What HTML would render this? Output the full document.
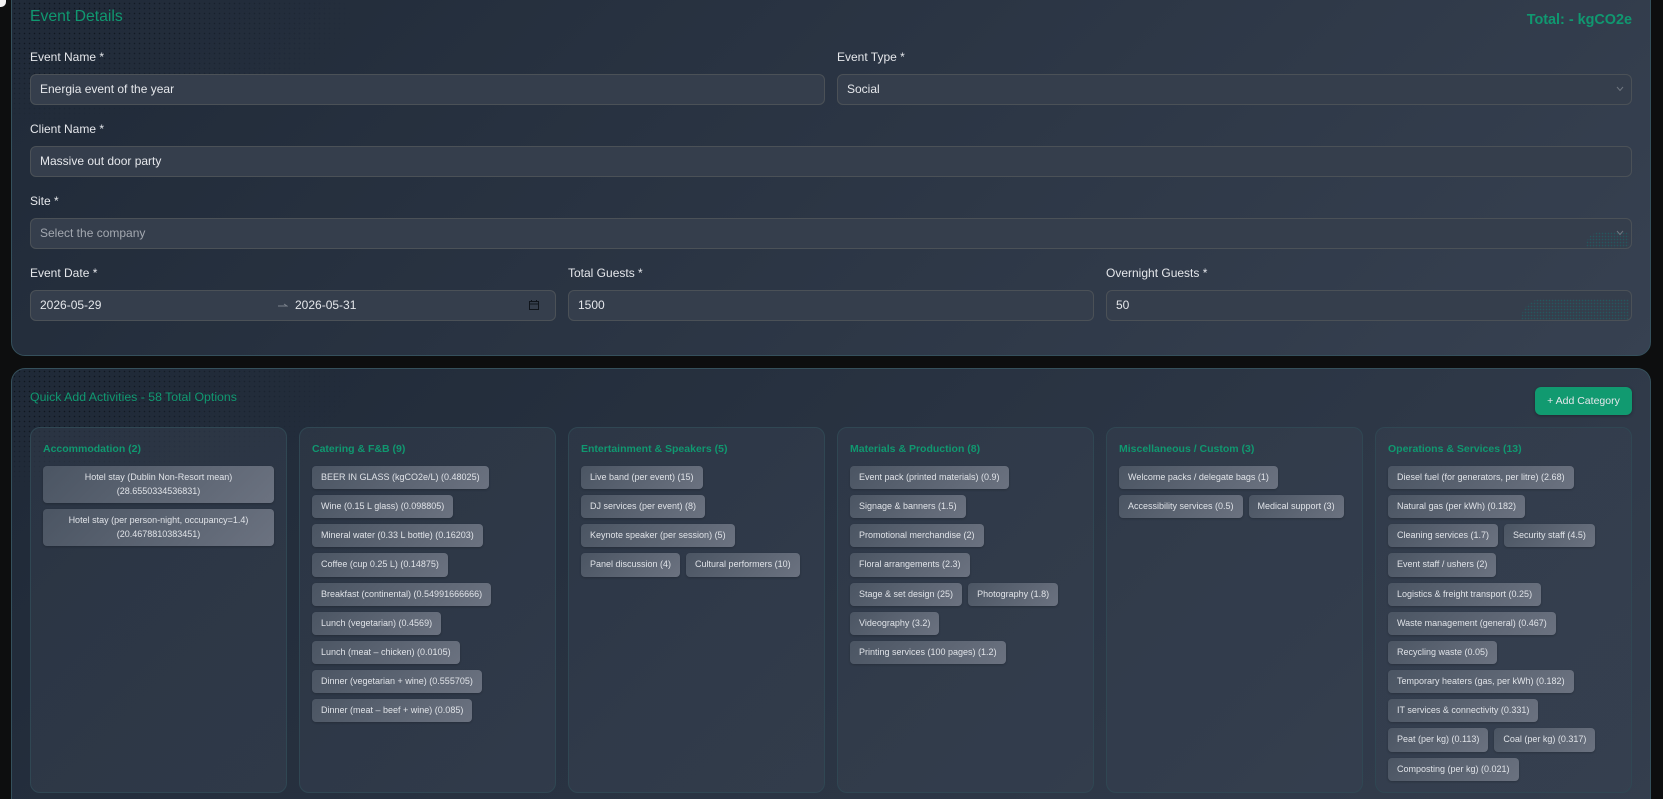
<!DOCTYPE html>
<html><head><meta charset="utf-8"><style>
*{box-sizing:border-box}
html,body{margin:0;padding:0;width:1663px;height:799px;overflow:hidden;background:#0d0e0f;font-family:"Liberation Sans",sans-serif}
#root{position:relative;width:1663px;height:799px;overflow:hidden}
.panel{position:absolute;left:11px;width:1640px;border:1px solid #35505c;border-radius:14px;background:linear-gradient(135deg,#1f2937 0%,#374151 100%);overflow:hidden}
#p1{top:-60px;height:416px}
#p2{top:368px;height:431px;border-bottom:0;border-radius:14px 14px 0 0;background:linear-gradient(135deg,#1f2937 0%,#374151 116%)}
.dots{position:absolute;left:0;top:0;width:370px;height:150px;background-image:radial-gradient(circle,rgba(5,10,15,.6) .6px,transparent .9px);background-size:5px 5px;-webkit-mask-image:radial-gradient(ellipse 340px 100px at 0 20px,#000 30%,transparent 100%);mask-image:radial-gradient(ellipse 340px 100px at 0 20px,#000 30%,transparent 100%)}
.abs{position:absolute;white-space:nowrap}
.lab{position:absolute;white-space:nowrap;font-size:12px;line-height:16px;color:#e5e7eb}
.inp{position:absolute;height:31px;border:1px solid #4b5157;border-radius:6px;background:#353e4c;color:#e5e7eb;font-size:12px;line-height:29px;padding-left:9px;white-space:nowrap}
.g{color:#109870}
.col{position:absolute;top:427px;width:257px;height:366px;border:1px solid #304753;border-radius:10px;background:linear-gradient(135deg,rgba(55,65,81,.42),rgba(55,65,81,.55));padding:12px}
.col h4{margin:0 0 9px;font-size:10.5px;line-height:16px;font-weight:700;color:#109870;white-space:nowrap;padding-top:1px}
.tags{display:flex;flex-wrap:wrap;gap:6px}
.t{font-size:9px;line-height:14.15px;padding:4px 9px 5px;border-radius:4px;background:linear-gradient(135deg,#4b5563,#6b7280);color:#e0e3e8;white-space:nowrap;box-shadow:0 1px 2px rgba(0,0,0,.2)}
.t.w{width:100%;text-align:center;line-height:14px}
.chev{position:absolute;width:12px;height:8px}
.tex{position:absolute;background-image:radial-gradient(circle,rgba(20,110,110,.55) .6px,transparent .9px);background-size:3px 3px}
</style></head><body><div id="root">
<div style="position:absolute;left:0;top:0;width:6px;height:7px;background:#f2f2f2;border-radius:0 0 5px 0"></div>

<div class="panel" id="p1"><div class="dots" style="top:60px"></div></div>
<div class="panel" id="p2"><div class="dots"></div></div>

<div class="abs g" style="left:30px;top:8px;font-size:15.75px;line-height:18px">Event Details</div>
<div class="abs g" style="right:31px;top:12px;font-size:14.4px;line-height:16px;font-weight:700">Total: - kgCO2e</div>

<div class="lab" style="left:30px;top:49px">Event Name *</div>
<div class="inp" style="left:30px;top:74px;width:795px">Energia event of the year</div>
<div class="lab" style="left:837px;top:49px">Event Type *</div>
<div class="inp" style="left:837px;top:74px;width:795px">Social</div>
<svg class="chev" style="left:1614px;top:85px" viewBox="0 0 12 8"><path d="M3 2 6 5.5 9 2" fill="none" stroke="#6f7680" stroke-width="1"/></svg>

<div class="lab" style="left:30px;top:121px">Client Name *</div>
<div class="inp" style="left:30px;top:146px;width:1602px">Massive out door party</div>

<div class="lab" style="left:30px;top:193px">Site *</div>
<div class="inp" style="left:30px;top:218px;width:1602px;color:#a3a8b0">Select the company</div>
<div class="tex" style="left:1586px;top:232px;width:43px;height:16px;border-radius:14px 0 0 0"></div>
<svg class="chev" style="left:1614px;top:229px" viewBox="0 0 12 8"><path d="M3 2 6 5.5 9 2" fill="none" stroke="#6f7680" stroke-width="1"/></svg>

<div class="lab" style="left:30px;top:265px">Event Date *</div>
<div class="inp" style="left:30px;top:290px;width:526px">2026-05-29</div>
<div class="abs" style="left:295px;top:290px;font-size:12px;line-height:31px;color:#e5e7eb">2026-05-31</div>
<svg style="position:absolute;left:277px;top:302px" width="11" height="7" viewBox="0 0 11 7"><path d="M1 4H10L7 2" fill="none" stroke="#7b828c" stroke-width="1"/></svg>
<svg style="position:absolute;left:528px;top:299px" width="12" height="12" viewBox="0 0 12 12"><path d="M1.5 2.5H10.5V10.5H1.5ZM1.5 5H10.5M3.5 1V3M8.5 1V3" fill="none" stroke="#10151c" stroke-width="1"/></svg>

<div class="lab" style="left:568px;top:265px">Total Guests *</div>
<div class="inp" style="left:568px;top:290px;width:526px">1500</div>
<div class="lab" style="left:1106px;top:265px">Overnight Guests *</div>
<div class="inp" style="left:1106px;top:290px;width:526px">50</div>
<div class="tex" style="left:1521px;top:299px;width:108px;height:21px;border-radius:60px 0 0 0"></div>

<div class="abs g" style="left:30px;top:389px;font-size:12.3px;line-height:16px">Quick Add Activities - 58 Total Options</div>
<div class="abs" style="left:1535px;top:387px;width:97px;height:28px;border-radius:6px;background:#119a70;color:#e5e7eb;font-size:10.5px;line-height:28px;text-align:center;box-shadow:0 1px 3px rgba(0,0,0,.3)">+ Add Category</div>

<div class="col" style="left:30px"><h4>Accommodation (2)</h4><div class="tags">
<div class="t w">Hotel stay (Dublin Non-Resort mean)<br>(28.6550334536831)</div>
<div class="t w">Hotel stay (per person-night, occupancy=1.4)<br>(20.4678810383451)</div>
</div></div>

<div class="col" style="left:299px"><h4>Catering &amp; F&amp;B (9)</h4><div class="tags" style="flex-direction:column;align-items:flex-start">
<div class="t">BEER IN GLASS (kgCO2e/L) (0.48025)</div>
<div class="t">Wine (0.15 L glass) (0.098805)</div>
<div class="t">Mineral water (0.33 L bottle) (0.16203)</div>
<div class="t">Coffee (cup 0.25 L) (0.14875)</div>
<div class="t">Breakfast (continental) (0.54991666666)</div>
<div class="t">Lunch (vegetarian) (0.4569)</div>
<div class="t">Lunch (meat – chicken) (0.0105)</div>
<div class="t">Dinner (vegetarian + wine) (0.555705)</div>
<div class="t">Dinner (meat – beef + wine) (0.085)</div>
</div></div>

<div class="col" style="left:568px"><h4>Entertainment &amp; Speakers (5)</h4><div class="tags" style="width:231px">
<div class="t" style="margin-right:60px">Live band (per event) (15)</div>
<div class="t" style="margin-right:60px">DJ services (per event) (8)</div>
<div class="t" style="margin-right:60px">Keynote speaker (per session) (5)</div>
<div class="t">Panel discussion (4)</div>
<div class="t">Cultural performers (10)</div>
</div></div>

<div class="col" style="left:837px"><h4>Materials &amp; Production (8)</h4><div class="tags">
<div class="t" style="margin-right:60px">Event pack (printed materials) (0.9)</div>
<div class="t" style="margin-right:100px">Signage &amp; banners (1.5)</div>
<div class="t" style="margin-right:90px">Promotional merchandise (2)</div>
<div class="t" style="margin-right:100px">Floral arrangements (2.3)</div>
<div class="t">Stage &amp; set design (25)</div>
<div class="t">Photography (1.8)</div>
<div class="t" style="margin-right:120px">Videography (3.2)</div>
<div class="t">Printing services (100 pages) (1.2)</div>
</div></div>

<div class="col" style="left:1106px"><h4>Miscellaneous / Custom (3)</h4><div class="tags">
<div class="t" style="margin-right:60px">Welcome packs / delegate bags (1)</div>
<div class="t">Accessibility services (0.5)</div>
<div class="t">Medical support (3)</div>
</div></div>

<div class="col" style="left:1375px"><h4>Operations &amp; Services (13)</h4><div class="tags">
<div class="t" style="margin-right:30px">Diesel fuel (for generators, per litre) (2.68)</div>
<div class="t" style="margin-right:60px">Natural gas (per kWh) (0.182)</div>
<div class="t">Cleaning services (1.7)</div>
<div class="t">Security staff (4.5)</div>
<div class="t" style="margin-right:100px">Event staff / ushers (2)</div>
<div class="t" style="margin-right:60px">Logistics &amp; freight transport (0.25)</div>
<div class="t" style="margin-right:60px">Waste management (general) (0.467)</div>
<div class="t" style="margin-right:100px">Recycling waste (0.05)</div>
<div class="t" style="margin-right:30px">Temporary heaters (gas, per kWh) (0.182)</div>
<div class="t" style="margin-right:60px">IT services &amp; connectivity (0.331)</div>
<div class="t">Peat (per kg) (0.113)</div>
<div class="t">Coal (per kg) (0.317)</div>
<div class="t" style="margin-right:60px">Composting (per kg) (0.021)</div>
</div></div>
</div></body></html>
